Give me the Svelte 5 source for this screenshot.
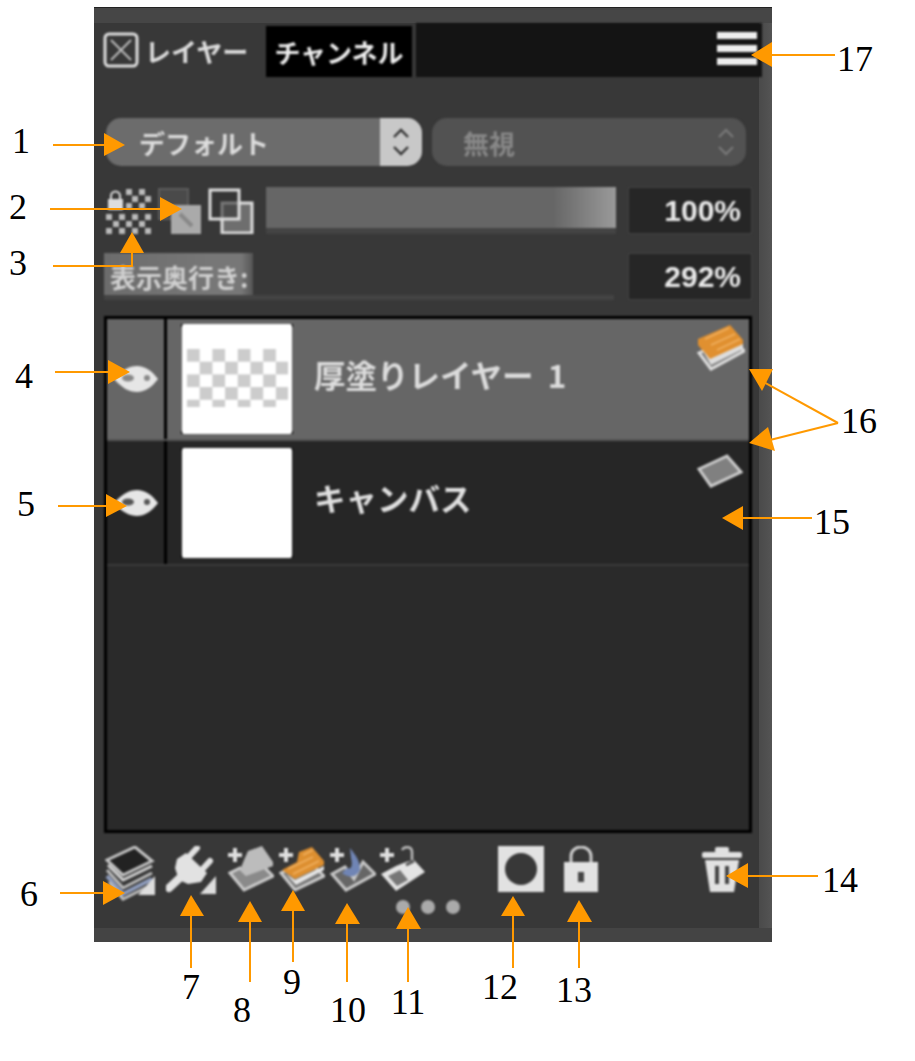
<svelte:options runes />

<script>
	// annotation arrows: line + head, page coordinates
	const arrows = [
		{ line: 'M53 145H104', head: '104,133 125,145 104,156' },
		{ line: 'M50 209H160', head: '160,197 182,209 160,221' },
		{ line: 'M53 266H132V252', head: '120,253 132,232 144,253' },
		{ line: 'M55 372H108', head: '108,360 130,372 108,384' },
		{ line: 'M58 506H106', head: '106,494 127,506 106,517' },
		{ line: 'M60 893H103', head: '103,881 125,893 103,905' },
		{ line: 'M191 968V916', head: '180,916 191,895 204,916' },
		{ line: 'M250 982V922', head: '238,922 250,901 262,922' },
		{ line: 'M293 962V911', head: '281,911 293,890 305,911' },
		{ line: 'M347 982V924', head: '335,924 347,903 360,924' },
		{ line: 'M408 982V929', head: '396,929 408,907 421,929' },
		{ line: 'M513 968V916', head: '501,916 513,896 525,916' },
		{ line: 'M579 968V922', head: '567,922 579,900 592,922' },
		{ line: 'M818 876H748', head: '748,863 726,876 748,888' },
		{ line: 'M812 518H743', head: '743,506 722,518 743,530' },
		{ line: 'M838 423L760 380', head: '749,369 773,369 762,391' },
		{ line: 'M838 423L770 440', head: '749,443 768,427 775,451' },
		{ line: 'M835 55H772', head: '772,42 751,55 772,67' }
	];

	const numbers = [
		{ n: 1, x: 21, y: 153 },
		{ n: 2, x: 18, y: 219 },
		{ n: 3, x: 18, y: 275 },
		{ n: 4, x: 24, y: 388 },
		{ n: 5, x: 26, y: 516 },
		{ n: 6, x: 29, y: 906 },
		{ n: 7, x: 191, y: 999 },
		{ n: 8, x: 242, y: 1022 },
		{ n: 9, x: 292, y: 994 },
		{ n: 10, x: 348, y: 1022 },
		{ n: 11, x: 408, y: 1014 },
		{ n: 12, x: 500, y: 999 },
		{ n: 13, x: 574, y: 1002 },
		{ n: 14, x: 840, y: 892 },
		{ n: 15, x: 832, y: 534 },
		{ n: 16, x: 859, y: 433 },
		{ n: 17, x: 855, y: 71 }
	];
</script>

<div class="page">
	<div class="panel">
		<div class="tabs soft">
			<div class="tab-active">
				<svg class="close" viewBox="0 0 36 36">
					<rect x="2" y="2" width="32" height="32" rx="4" fill="none" stroke="#ddd" stroke-width="3" />
					<path d="M8 8L28 28M28 8L8 28" stroke="#bbb" stroke-width="2" />
				</svg>
				<span>レイヤー</span>
			</div>
			<div class="tab">チャンネル</div>
			<div class="tab-fill">
				<div class="menu"><i></i><i></i><i></i></div>
			</div>
		</div>

		<div class="selects soft">
			<div class="select on">
				<span>デフォルト</span>
				<div class="stepper">
					<svg viewBox="0 0 20 32" width="20" height="32">
						<path d="M3 11L10 4L17 11M3 21L10 28L17 21" fill="none" stroke="#333" stroke-width="2.4" />
					</svg>
				</div>
			</div>
			<div class="select off">
				<span>無視</span>
				<svg viewBox="0 0 20 32" width="20" height="32">
					<path d="M3 11L10 4L17 11M3 21L10 28L17 21" fill="none" stroke="#777" stroke-width="2.4" />
				</svg>
			</div>
		</div>

		<div class="opacity soft">
			<div class="lock-icons">
				<svg class="lockcheck" viewBox="0 0 46 46">
					<path d="M5 12V8a4.500 4.500 0 0 1 9 0V12" fill="none" stroke="#ddd" stroke-width="2" />
					<rect x="2" y="11" width="15" height="11" fill="#ddd" />
					<g fill="#bbb">
						<rect x="20" y="1" width="6" height="6" /><rect x="33" y="1" width="6" height="6" />
						<rect x="26" y="8" width="6" height="6" /><rect x="39" y="8" width="6" height="6" />
						<rect x="20" y="15" width="6" height="6" /><rect x="33" y="15" width="6" height="6" />
						<rect x="0" y="26" width="6" height="6" /><rect x="13" y="26" width="6" height="6" /><rect x="26" y="26" width="6" height="6" /><rect x="39" y="26" width="6" height="6" />
						<rect x="7" y="33" width="6" height="6" /><rect x="20" y="33" width="6" height="6" /><rect x="33" y="33" width="6" height="6" />
						<rect x="0" y="40" width="6" height="6" /><rect x="13" y="40" width="6" height="6" /><rect x="26" y="40" width="6" height="6" /><rect x="39" y="40" width="6" height="6" />
					</g>
				</svg>
				<svg class="clip" viewBox="0 0 44 46">
					<rect x="1" y="1" width="29" height="30" fill="#4a4a4a" stroke="#5c5c5c" stroke-width="2" />
					<rect x="13" y="17" width="30" height="29" fill="#aaa" />
					<path d="M22 26L34 38" stroke="#888" stroke-width="4" />
				</svg>
				<svg class="blend" viewBox="0 0 46 46">
					<rect x="14" y="15" width="30" height="30" fill="#6e6e6e" stroke="#ddd" stroke-width="3" />
					<rect x="2" y="2" width="29" height="29" fill="#333" fill-opacity="0.6" stroke="#ddd" stroke-width="3" />
				</svg>
			</div>
			<div class="slider"></div>
			<div class="value">100%</div>
		</div>

		<div class="depth soft">
			<div class="depth-track">
				<div class="depth-fill">表示奥行き:</div>
			</div>
			<div class="value">292%</div>
		</div>

		<div class="list soft">
			<div class="row selected">
				<div class="eye-cell">
					<svg class="eye" viewBox="0 0 44 28">
						<path d="M0 14C8 5 15 1 23 1C31 1 38 6 44 14C38 22 31 27 23 27C15 27 8 23 0 14Z" fill="#e6e6e6" />
						<ellipse cx="14" cy="13" rx="6" ry="3.500" fill="#888" />
						<circle cx="33" cy="13" r="3" fill="#888" />
					</svg>
				</div>
				<div class="thumb"><div class="sheet"><div class="checker"></div></div></div>
				<div class="name">厚塗りレイヤー 1</div>
				<svg class="kind" viewBox="0 0 48 46">
					<polygon points="2,28 36,12 47,26 14,44" fill="#7a7a7a" stroke="#ddd" stroke-width="3" />
					<polygon points="1,14 33,0 46,15 46,20 13,35 1,20" fill="#e09030" />
					<polygon points="5,24 13,34 46,19 46,24 14,40" fill="#ddd" />
					<path d="M8 14L32 3M14 20L38 9M20 25L43 14" stroke="#f0b060" stroke-width="1.500" />
				</svg>
			</div>
			<div class="row plain">
				<div class="eye-cell">
					<svg class="eye" viewBox="0 0 44 28">
						<path d="M0 14C8 5 15 1 23 1C31 1 38 6 44 14C38 22 31 27 23 27C15 27 8 23 0 14Z" fill="#e6e6e6" />
						<ellipse cx="14" cy="13" rx="6" ry="3.500" fill="#555" />
						<circle cx="33" cy="13" r="3" fill="#555" />
					</svg>
				</div>
				<div class="thumb"><div class="sheet"></div></div>
				<div class="name">キャンバス</div>
				<svg class="kind flat" viewBox="0 0 46 34">
					<polygon points="2,15 30,2 44,18 14,32" fill="#808080" stroke="#ccc" stroke-width="3" />
				</svg>
			</div>
		</div>

		<div class="tools soft">
			<div class="tool-row">
				<svg class="t6" viewBox="0 0 50 56">
					<path d="M2 24L18 42L47 27" fill="none" stroke="#bbb" stroke-width="3" />
					<path d="M2 30L18 48L47 33" fill="none" stroke="#8e9cbc" stroke-width="4" />
					<path d="M4 36L18 53L42 41" fill="none" stroke="#bbb" stroke-width="3" />
					<polygon points="2,14 30,1 47,15 18,29" fill="#222" stroke="#c4c4c4" stroke-width="3" />
					<path d="M3 19L18 34L47 20" fill="none" stroke="#d0d0d0" stroke-width="3" />
					<polygon points="33,49 50,49 50,30" fill="#ddd" />
				</svg>
				<svg class="t7" viewBox="0 0 50 50">
					<path d="M31 2L20 14M44 15L33 27" stroke="#e2e2e2" stroke-width="6" stroke-linecap="round" />
					<path d="M3 42L18 28" stroke="#e2e2e2" stroke-width="8" stroke-linecap="round" />
					<path d="M11 13L20 7L41 27L35 36L22 38L13 34L9 22Z" fill="#e2e2e2" />
					<polygon points="34,48 50,48 50,30" fill="#ddd" />
				</svg>
				<svg class="t8" viewBox="0 0 46 46">
					<path d="M7 2V16M0 9H14" stroke="#e0e0e0" stroke-width="4" />
					<polygon points="2,27 16,44 45,30 36,21 18,28 12,22" fill="#8a8a8a" stroke="#ccc" stroke-width="3" />
					<polygon points="16,14 20,5 34,0 45,16 45,20 18,30 12,24" fill="#bcbcbc" />
				</svg>
				<svg class="t9" viewBox="0 0 46 46">
					<path d="M7 2V16M0 9H14" stroke="#e0e0e0" stroke-width="4" />
					<polygon points="2,27 16,44 45,30 36,21 18,28 12,22" fill="#777" stroke="#ccc" stroke-width="3" />
					<polygon points="3,24 18,16 20,6 33,1 45,15 45,19 16,33" fill="#dd8f30" />
					<polygon points="7,28 16,34 45,20 45,24 17,39" fill="#e4e4e4" />
					<path d="M9 23L34 11M14 28L40 15M24 9L34 4" stroke="#f0b060" stroke-width="1.500" />
				</svg>
				<svg class="t10" viewBox="0 0 46 46">
					<path d="M7 2V16M0 9H14" stroke="#e0e0e0" stroke-width="4" />
					<polygon points="2,28 15,21 24,33 33,16 45,28 16,44" fill="#666" stroke="#c8c8c8" stroke-width="3" />
					<path d="M20 2C26 10 30 14 30 24C26 32 18 32 12 27L17 22C21 24 23 20 21 12Z" fill="#7085b5" />
				</svg>
				<svg class="t11" viewBox="0 0 46 46">
					<path d="M7 2V16M0 9H14" stroke="#e0e0e0" stroke-width="4" />
					<path d="M22 4C24 0 32 0 32 6V14" fill="none" stroke="#bbb" stroke-width="2.500" />
					<polygon points="1,28 16,20 26,16 34,14 45,26 16,45" fill="#e4e4e4" />
					<polygon points="8,30 20,24 28,34 17,40" fill="#777" />
					<path d="M26 19L34 15" stroke="#555" stroke-width="3" />
				</svg>
				<svg class="t12" viewBox="0 0 46 46">
					<rect width="46" height="46" fill="#e2e2e2" />
					<circle cx="23" cy="23" r="16" fill="#383838" />
				</svg>
				<svg class="t13" viewBox="0 0 34 46">
					<path d="M7 20V10a10 9 0 0 1 20 0V20" fill="none" stroke="#ccc" stroke-width="3" />
					<rect x="0" y="16" width="34" height="30" fill="#e2e2e2" />
					<rect x="14" y="26" width="6" height="10" fill="#444" />
				</svg>
				<svg class="t14" viewBox="0 0 40 46">
					<rect x="0" y="6" width="40" height="6" rx="2" fill="#e2e2e2" />
					<rect x="13" y="1" width="14" height="6" rx="2" fill="#e2e2e2" />
					<path d="M3 14H37L32 46H8Z" fill="#e2e2e2" />
					<path d="M15 20V38M25 20V38" stroke="#444" stroke-width="4" />
				</svg>
			</div>
			<div class="dots"><i></i><i></i><i></i></div>
		</div>
	</div>

	<svg class="notes" viewBox="0 0 915 1061">
		{#each arrows as a}
			<path d={a.line} fill="none" stroke="#f90" stroke-width="2" />
			<polygon points={a.head} fill="#f90" />
		{/each}
		{#each numbers as item}
			<text x={item.x} y={item.y} text-anchor="middle">{item.n}</text>
		{/each}
	</svg>
</div>

<style>
	:global(body) {
		background: #fff;
	}

	.page {
		position: relative;
		width: 915px;
		height: 1061px;
		padding: 7px 0 0 94px;
		box-sizing: border-box;
		overflow: hidden;
	}

	.notes {
		position: absolute;
		left: 0;
		top: 0;
		width: 915px;
		height: 1061px;
	}

	.notes text {
		font-family: 'Liberation Serif', serif;
		font-size: 36px;
		fill: #000;
	}

	/* panel chrome: lighter strips on top, bottom and right */
	.panel {
		width: 678px;
		height: 935px;
		box-sizing: border-box;
		padding: 15px 10px 0;
		background:
			linear-gradient(#464646, #464646) 0 0 / 100% 15px no-repeat,
			linear-gradient(#444, #444) 0 100% / 100% 14px no-repeat,
			linear-gradient(90deg, #4a4a4a, #545454) 100% 0 / 13px 100% no-repeat,
			#383838;
		border-top: 1px solid #222;
		font-family: 'Noto Sans CJK JP', 'Noto Sans', sans-serif;
		font-weight: 700;
		color: #ddd;
	}

	/* the source is a soft upscale */
	.soft {
		filter: blur(0.9px);
	}

	.tabs {
		display: flex;
		height: 54px;
		font-size: 26px;
	}

	.tab-active {
		width: 162px;
		display: flex;
		align-items: center;
		gap: 6px;
	}

	.close {
		width: 36px;
		height: 36px;
		margin-left: -1px;
	}

	.tab {
		width: 146px;
		margin-top: 3px;
		background: #000;
		color: #eee;
		display: flex;
		align-items: center;
		justify-content: center;
		line-height: 1;
	}

	.tab-fill {
		width: 346px;
		margin-left: 4px;
		background: #141414;
		display: flex;
		justify-content: flex-end;
		align-items: center;
	}

	.menu {
		width: 40px;
		margin: -3px 5px 0 0;
		display: flex;
		flex-direction: column;
		gap: 6px;
	}

	.menu i {
		height: 7px;
		background: #eee;
	}

	.selects {
		display: flex;
		gap: 10px;
		margin: 41px 0 0 2px;
		height: 48px;
		font-size: 26px;
	}

	.select {
		display: flex;
		align-items: center;
		justify-content: space-between;
		border-radius: 15px;
		overflow: hidden;
	}

	.select.on {
		width: 316px;
		background: #6c6c6c;
		padding-left: 33px;
		box-sizing: border-box;
		color: #ddd;
	}

	.select.off {
		width: 314px;
		background: #525252;
		padding: 0 10px 0 31px;
		box-sizing: border-box;
		color: #888;
	}

	.stepper {
		width: 42px;
		height: 100%;
		background: #c8c8c8;
		display: flex;
		align-items: center;
		justify-content: center;
	}

	.opacity {
		display: flex;
		height: 47px;
		margin-top: 21px;
	}

	.lock-icons {
		width: 162px;
		flex: none;
		display: flex;
		align-items: flex-end;
		padding-left: 2px;
		box-sizing: border-box;
	}

	.lockcheck {
		width: 46px;
		height: 46px;
	}

	.clip {
		width: 44px;
		height: 46px;
		margin-left: 6px;
	}

	.blend {
		width: 46px;
		height: 46px;
		margin-left: 6px;
	}

	.slider {
		width: 350px;
		height: 41px;
		background: linear-gradient(90deg, #666 0, #666 82%, #9a9a9a 100%);
		border-bottom: 6px solid #444;
	}

	.value {
		width: 124px;
		margin-left: 12px;
		flex: none;
		height: 47px;
		box-sizing: border-box;
		background: #262626;
		border: 1px solid #444;
		font-family: 'Liberation Sans', 'Noto Sans', sans-serif;
		font-size: 30px;
		color: #e8e8e8;
		display: flex;
		align-items: center;
		justify-content: flex-end;
		padding-right: 10px;
	}

	.depth {
		display: flex;
		height: 48px;
		margin-top: 19px;
	}

	.depth-track {
		width: 510px;
		height: 47px;
		box-sizing: border-box;
		border-bottom: 5px solid #444;
	}

	.depth-fill {
		width: 149px;
		height: 42px;
		background: linear-gradient(90deg, #6c6c6c 0, #777 70%, #777 92%, #555 100%);
		font-size: 26px;
		line-height: 48px;
		white-space: nowrap;
		overflow: hidden;
		color: #d0d0d0;
		padding-left: 6px;
		box-sizing: border-box;
	}

	.depth .value {
		margin-left: 14px;
	}

	.list {
		width: 648px;
		height: 517px;
		box-sizing: border-box;
		margin-top: 15px;
		background: #2a2a2a;
		border: 3px solid #000;
	}

	.row {
		position: relative;
		display: flex;
		align-items: center;
		box-sizing: border-box;
		border-bottom: 2px solid #3a3a3a;
	}

	.row.selected {
		height: 122px;
		background: #666;
		border-bottom-color: #555;
	}

	.row.plain {
		height: 125px;
		background: #262626;
	}

	.eye-cell {
		width: 57px;
		height: 100%;
		flex: none;
		border-right: 3px solid #000;
		display: flex;
		align-items: center;
		justify-content: center;
	}

	.row.plain .eye-cell {
		align-items: flex-end;
	}

	.eye {
		width: 44px;
		height: 28px;
	}

	.row.plain .eye {
		margin-bottom: 47px;
	}

	.thumb {
		width: 114px;
		height: 112px;
		flex: none;
		margin-left: 13px;
		padding: 1px 2px;
		box-sizing: border-box;
		background:
			radial-gradient(circle 2px, #000 100%, transparent) 0 0 / 5px 5px no-repeat,
			radial-gradient(circle 2px, #000 100%, transparent) 100% 0 / 5px 5px no-repeat,
			radial-gradient(circle 2px, #000 100%, transparent) 0 100% / 5px 5px no-repeat,
			radial-gradient(circle 2px, #000 100%, transparent) 100% 100% / 5px 5px no-repeat;
	}

	.sheet {
		height: 100%;
		background: #fff;
		border-radius: 2px;
		padding: 25px 4px 0 5px;
		box-sizing: border-box;
	}

	.checker {
		height: 58px;
		background: repeating-conic-gradient(transparent 0 25%, #ccc 0 50%) 0 0 / 25.4px 25.4px;
	}

	.name {
		margin: -10px 0 0 20px;
		font-size: 31.5px;
		word-spacing: 7px;
		color: #dcdcdc;
	}

	.row.plain .name {
		margin-top: -12px;
		color: #e0e0e0;
	}

	/* layer type badge in the row corner */
	.kind {
		position: absolute;
		right: 4px;
		top: 6px;
		width: 48px;
		height: 46px;
	}

	.kind.flat {
		right: 6px;
		top: 13px;
		width: 46px;
		height: 34px;
	}

	.tools {
		padding-top: 13px;
	}

	.tool-row {
		display: flex;
		align-items: flex-start;
		height: 58px;
		margin-left: 1px;
	}

	.tool-row svg {
		flex: none;
	}

	.t6 { width: 50px; height: 56px; }
	.t7 { width: 50px; height: 50px; margin-left: 11px; }
	.t8 { width: 46px; height: 46px; margin-left: 12px; }
	.t9 { width: 46px; height: 46px; margin-left: 5px; }
	.t10 { width: 46px; height: 46px; margin-left: 5px; }
	.t11 { width: 46px; height: 46px; margin-left: 4px; }
	.t12 { width: 46px; height: 46px; margin-left: 72px; }
	.t13 { width: 34px; height: 46px; margin-left: 20px; }
	.t14 { width: 40px; height: 46px; margin-left: 104px; }

	.dots {
		display: flex;
		gap: 11px;
		margin: -4px 0 0 292px;
	}

	.dots i {
		width: 14px;
		height: 14px;
		border-radius: 50%;
		background: #aaa;
	}
</style>
